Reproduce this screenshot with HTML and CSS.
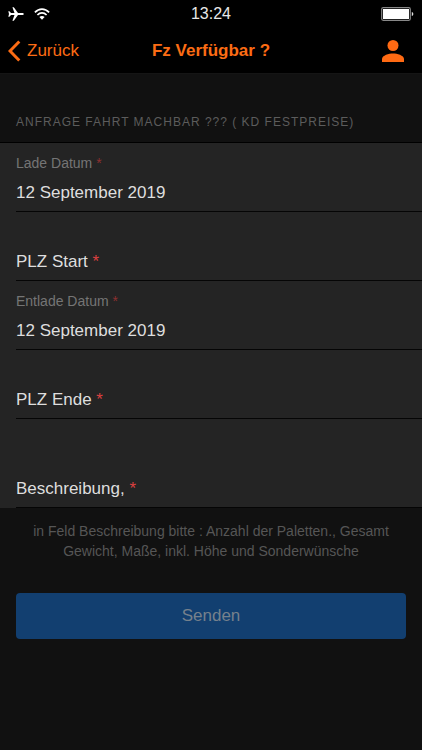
FILE: index.html
```html
<!DOCTYPE html>
<html lang="de">
<head>
<meta charset="utf-8">
<meta name="viewport" content="width=device-width, initial-scale=1">
<title>Fz Verfügbar ?</title>
<link rel="stylesheet" href="styles.css">
</head>
<body>
<header class="top">
  <div class="status">
    <div class="status-left">
      <svg width="16" height="14" viewBox="0 0 16 14" aria-hidden="true"><path fill="#fff" d="M15.800 7c0 .6-.8 1-1.700 1H10l-4.200 5.700H4.400L6.500 8H3L1.400 9.700H.3L1 7 .3 4.300h1.100L3 6h3.500L4.400.3h1.400L10 6h4.100c.9 0 1.700.4 1.700 1z"/></svg>
      <svg width="16" height="12" viewBox="0 0 16 12" aria-hidden="true"><g fill="none" stroke="#fff" stroke-width="1.700"><path d="M.9 4.400C5-.1 11-.1 15.100 4.400"/><path d="M3.400 7c2.700-2.800 6.500-2.800 9.200 0"/></g><path fill="#fff" d="M5.400 9c1.500-1.500 3.700-1.500 5.200 0L8 11.700z"/></svg>
    </div>
    <time class="clock">13:24</time>
    <div class="status-right">
      <svg width="33" height="14" viewBox="0 0 33 14" aria-hidden="true"><rect x=".7" y=".7" width="28.600" height="12.600" rx="1.500" fill="none" stroke="#888" stroke-width="1.200"/><rect x="2" y="2" width="26" height="10" fill="#fff"/><path fill="#ddd" d="M30.800 5c1 .2 1.500 1 1.500 2s-.5 1.800-1.500 2z"/></svg>
    </div>
  </div>
  <nav class="nav">
    <a class="back" href="#"><svg width="13" height="22" viewBox="0 0 13 22" aria-hidden="true"><path d="M11.300 1.500L2 11l9.300 9.500" fill="none" stroke="#fc6c14" stroke-width="3"/></svg>Zurück</a>
    <h1 class="title">Fz Verfügbar ?</h1>
    <a class="profile" href="#" aria-label="Profil"><svg width="22" height="22" viewBox="0 0 22 22" aria-hidden="true"><g fill="#ff6a13"><circle cx="11" cy="5.500" r="5.500"/><path d="M0 22v-3c0-3.700 7-5.500 11-5.500s11 1.800 11 5.500v3z"/></g></svg></a>
  </nav>
</header>
<main>
  <form>
    <h2 class="section">Anfrage Fahrt machbar ??? ( KD Festpreise)</h2>
    <div class="group">
      <div class="field filled">
        <label for="lade">Lade Datum <span class="req">*</span></label>
        <input id="lade" type="text" value="12 September 2019">
      </div>
      <div class="field">
        <label for="start">PLZ Start <span class="req">*</span></label>
        <input id="start" type="text">
      </div>
      <div class="field filled">
        <label for="entlade">Entlade Datum <span class="req">*</span></label>
        <input id="entlade" type="text" value="12 September 2019">
      </div>
      <div class="field">
        <label for="ende">PLZ Ende <span class="req">*</span></label>
        <input id="ende" type="text">
      </div>
      <div class="field tall">
        <label for="text">Beschreibung, <span class="req">*</span></label>
        <input id="text" type="text">
      </div>
    </div>
    <p class="hint">in Feld Beschreibung bitte : Anzahl der Paletten., Gesamt Gewicht, Maße, inkl. Höhe und Sonderwünsche</p>
    <button class="send" type="button">Senden</button>
  </form>
</main>
</body>
</html>
```
FILE: styles.css
```css
* {
  box-sizing: border-box;
}

body {
  margin: 0;
  min-height: 100vh;
  background: #111;
  color: #dedede;
  font-family: "Liberation Sans", Arial, sans-serif;
  font-size: 17px;
}

.top {
  background: #000;
  border-bottom: 1px solid #151515;
}

.status {
  display: grid;
  grid-template-columns: 1fr auto 1fr;
  align-items: center;
  height: 28px;
  padding: 0 8px;
}

.status-left {
  display: flex;
  align-items: center;
  gap: 10px;
}

.status-right {
  display: flex;
  justify-content: flex-end;
}

.clock {
  color: #e8e8e8;
  font-size: 16px;
}

.nav {
  display: grid;
  grid-template-columns: 1fr auto 1fr;
  align-items: center;
  height: 45px;
  padding: 0 8px;
}

.back {
  display: flex;
  align-items: center;
  gap: 6px;
  color: #fc6c14;
  text-decoration: none;
}

.title {
  margin: 0;
  color: #fc6c14;
  font-size: 17px;
  font-weight: bold;
}

.profile {
  display: flex;
  justify-content: flex-end;
  padding-right: 10px;
}

.section {
  margin: 0;
  padding: 40px 16px 12px;
  color: #5c5c5c;
  font-size: 12px;
  font-weight: normal;
  line-height: 16px;
  letter-spacing: 1px;
  text-transform: uppercase;
}

.group {
  padding-left: 16px;
  background: #242424;
  border-top: 1px solid #000;
}

.field {
  display: flex;
  align-items: flex-end;
  gap: 8px;
  height: 69px;
  padding-bottom: 8px;
  border-bottom: 1px solid #050505;
}

.field label,
.field input {
  line-height: 20px;
}

.field input {
  flex: 1;
  min-width: 0;
  height: 20px;
  padding: 0;
  border: 0;
  outline: 0;
  background: transparent;
  color: inherit;
  font: inherit;
}

.filled {
  flex-direction: column;
  align-items: stretch;
  justify-content: flex-end;
  gap: 10px;
}

.filled label {
  color: #757575;
  font-size: 14px;
}

.filled input {
  flex: none;
}

.tall {
  height: 89px;
}

.req {
  color: #dc4040;
}

.filled .req {
  color: #8c3030;
}

.hint {
  margin: 0;
  padding: 13px 24px 32px;
  color: #565656;
  font-size: 14px;
  line-height: 20px;
  text-align: center;
}

.send {
  display: block;
  width: calc(100% - 32px);
  height: 46px;
  margin: 0 16px;
  padding: 0;
  border: 0;
  border-radius: 4px;
  background: #123f70;
  color: #76818c;
  font: inherit;
}
```
